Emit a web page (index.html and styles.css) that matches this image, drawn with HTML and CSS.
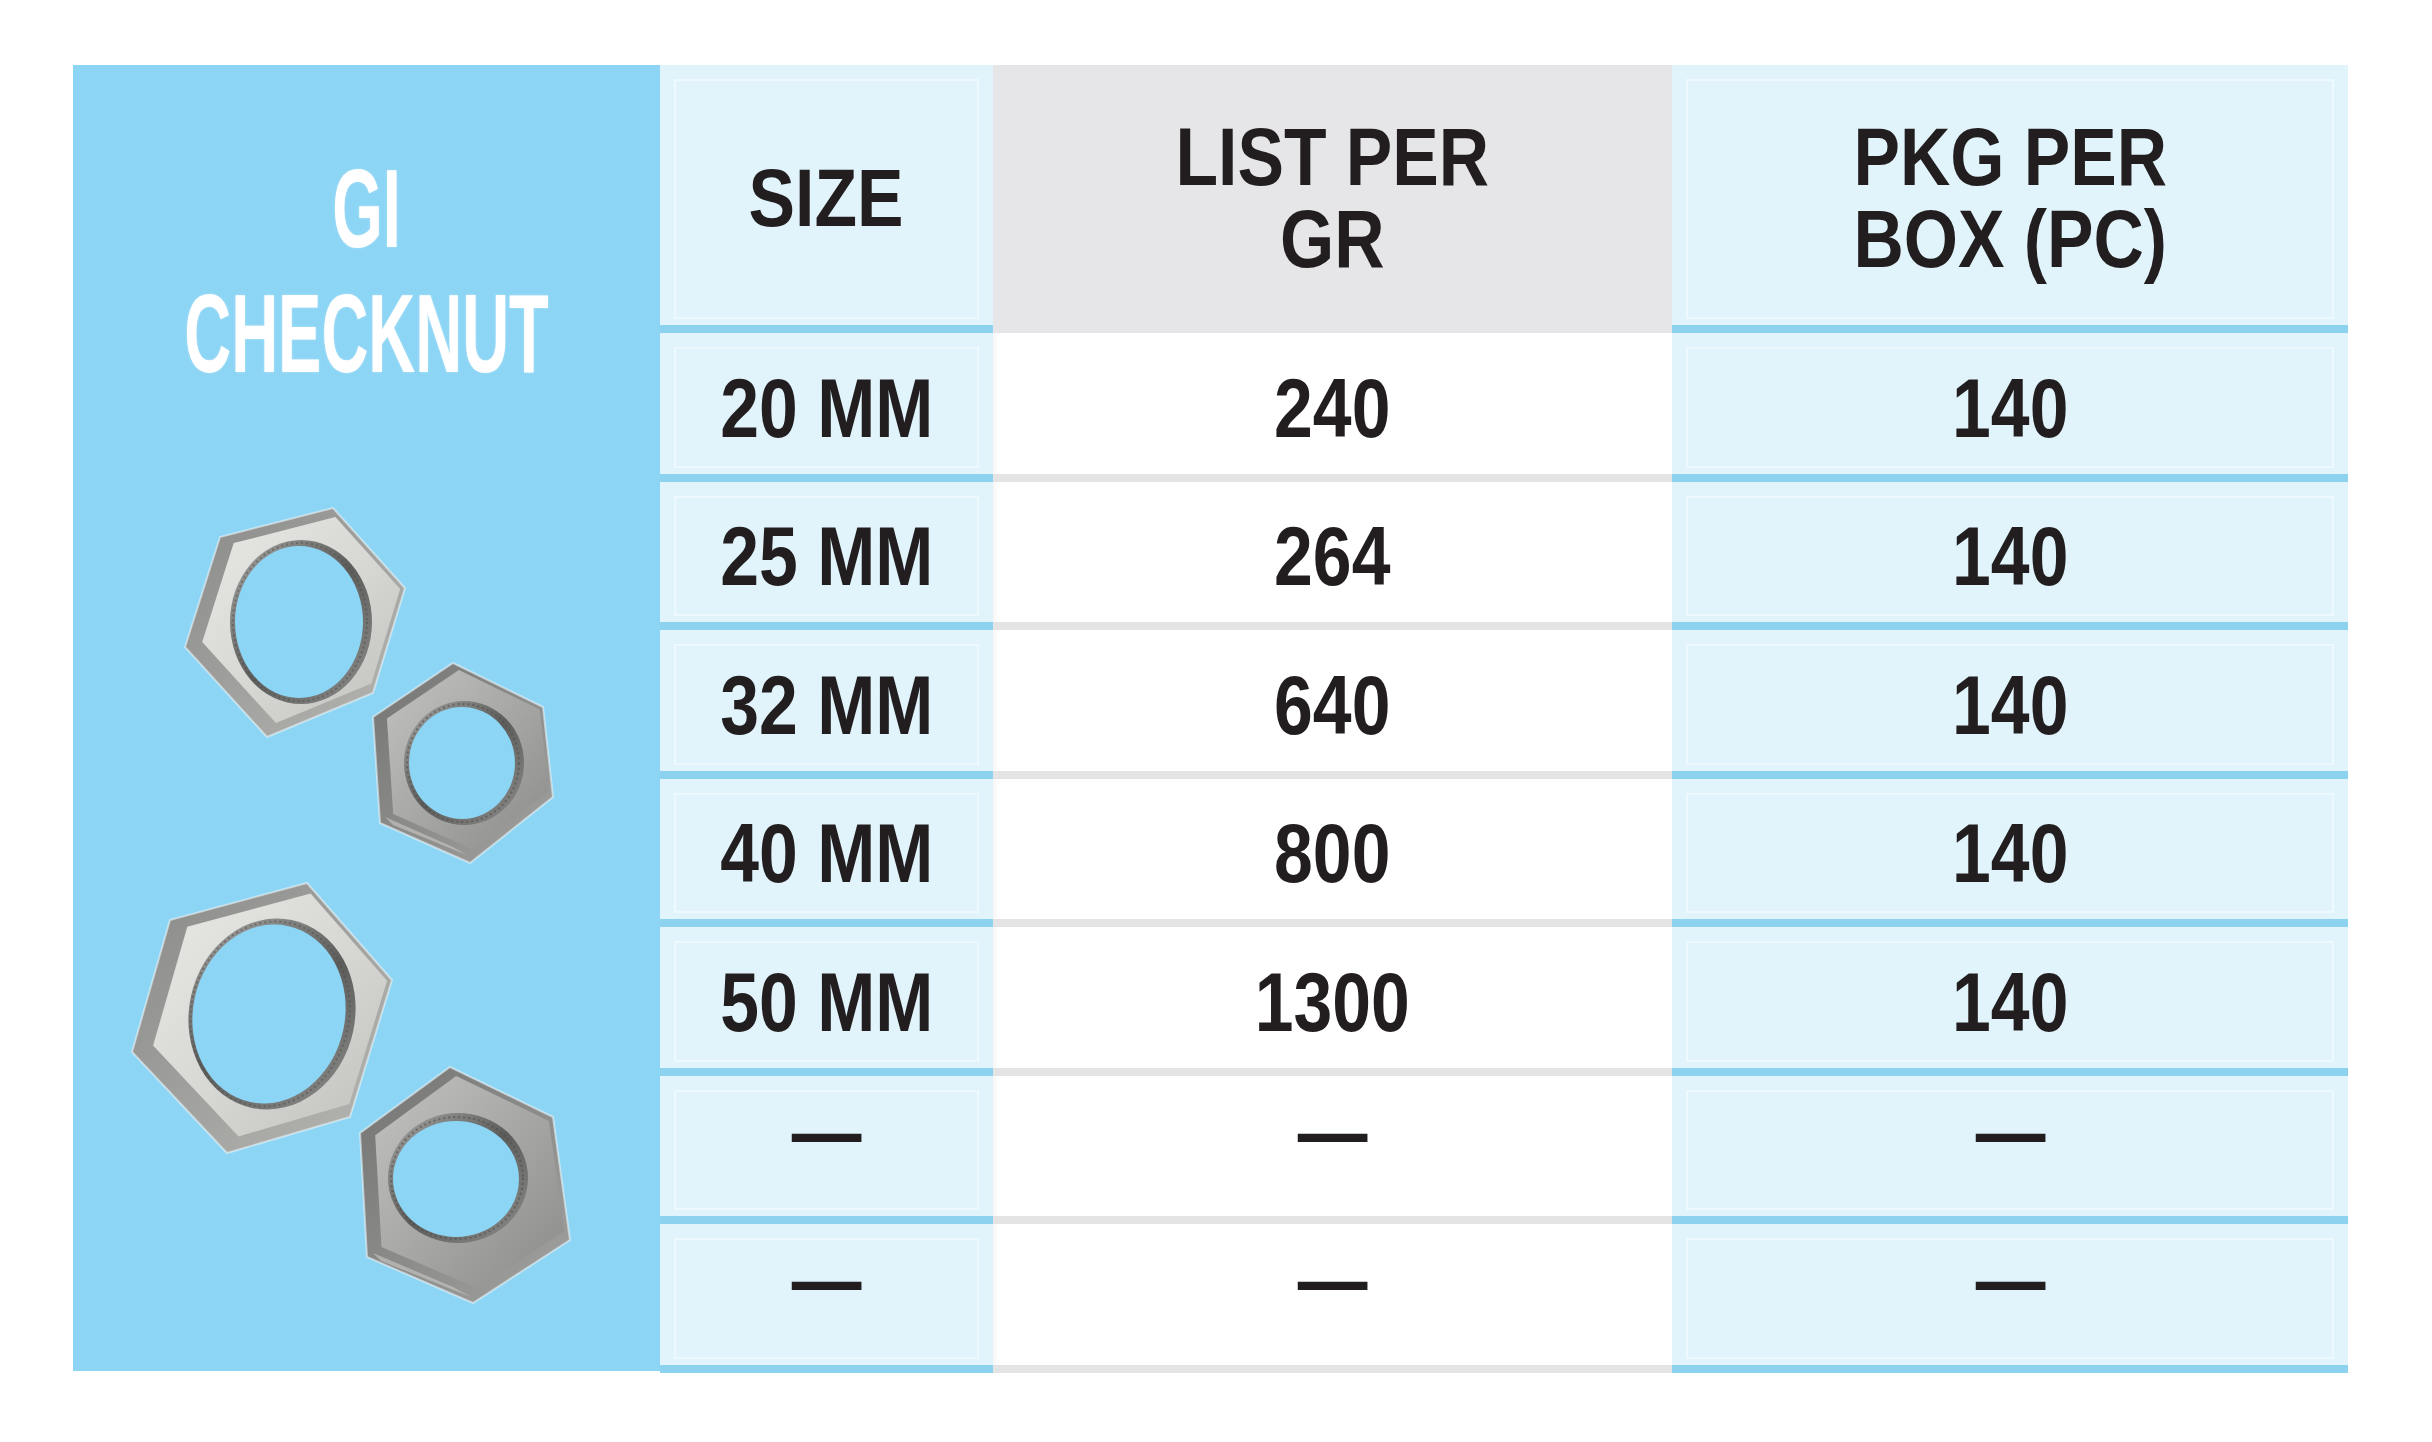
FILE: index.html
```html
<!DOCTYPE html>
<html lang="en">
<head>
<meta charset="utf-8">
<title>GI Checknut</title>
<link rel="stylesheet" href="styles.css">
</head>
<body>
<div class="sheet">
  <aside class="panel">
    <h1 class="title"><span>GI</span><span>CHECKNUT</span></h1>
    <svg class="nuts" viewBox="0 331 587 975" xmlns="http://www.w3.org/2000/svg">
      <defs>
        <linearGradient id="faceL" x1="0" y1="0" x2="1" y2="1">
          <stop offset="0" stop-color="#e8e8e5"/>
          <stop offset="0.5" stop-color="#d8d8d5"/>
          <stop offset="1" stop-color="#c0c0bd"/>
        </linearGradient>
        <linearGradient id="sideL" x1="0" y1="0" x2="1" y2="1">
          <stop offset="0" stop-color="#8a8a88"/>
          <stop offset="1" stop-color="#b6b6b3"/>
        </linearGradient>
        <linearGradient id="faceD" x1="0" y1="0" x2="1" y2="1">
          <stop offset="0" stop-color="#c2c2c0"/>
          <stop offset="0.5" stop-color="#a7a7a5"/>
          <stop offset="1" stop-color="#8b8b89"/>
        </linearGradient>
        <linearGradient id="sideD" x1="0" y1="0" x2="1" y2="1">
          <stop offset="0" stop-color="#747473"/>
          <stop offset="1" stop-color="#a2a2a0"/>
        </linearGradient>
        <linearGradient id="thread" x1="0" y1="0" x2="1" y2="1">
          <stop offset="0" stop-color="#a8a8a6"/>
          <stop offset="0.5" stop-color="#5c5c5b"/>
          <stop offset="1" stop-color="#8e8e8c"/>
        </linearGradient>
        <polygon id="n1" points="112,582 147,472 260,443 332,523 300,628 194,672"/>
        <polygon id="n2" points="380,598 470,642 480,732 397,798 307,758 300,652"/>
        <polygon id="n3" points="59,987 97,855 234,818 319,915 277,1052 154,1088"/>
        <polygon id="n4" points="377,1002 480,1052 497,1175 400,1238 294,1192 287,1068"/>
      </defs>

      <g class="nut">
        <use href="#n1" fill="url(#sideL)" stroke="#e9f3f7" stroke-width="2" stroke-opacity="0.6"/>
        <use href="#n1" fill="url(#faceL)" transform="translate(28.4 53.3) scale(0.9)"/>
        <ellipse cx="228" cy="557" rx="71" ry="82" fill="url(#thread)"/>
        <ellipse cx="227" cy="557" rx="67" ry="79" fill="none" stroke="#4e4e4d" stroke-width="2" stroke-dasharray="2 3" opacity="0.5"/>
        <ellipse cx="226" cy="557" rx="64" ry="76" fill="#8dd5f5"/>
      </g>

      <g class="nut">
        <use href="#n2" fill="url(#sideD)" stroke="#e9f3f7" stroke-width="2" stroke-opacity="0.6"/>
        <use href="#n2" fill="url(#faceD)" transform="translate(43.9 66.7) scale(0.9)"/>
        <polygon points="312,752 380,782 394,790 320,760" fill="#c9c9c7" opacity="0.6"/>
        <ellipse cx="391" cy="698" rx="60" ry="62" fill="url(#thread)"/>
        <ellipse cx="390" cy="698" rx="56" ry="59" fill="none" stroke="#4a4a49" stroke-width="2" stroke-dasharray="2 3" opacity="0.55"/>
        <ellipse cx="389" cy="698" rx="53" ry="56" fill="#8dd5f5"/>
      </g>

      <g class="nut">
        <use href="#n3" fill="url(#sideL)" stroke="#e9f3f7" stroke-width="2" stroke-opacity="0.6"/>
        <use href="#n3" fill="url(#faceL)" transform="translate(27 92.25) scale(0.9)"/>
        <ellipse cx="199" cy="949" rx="83" ry="96" fill="url(#thread)" transform="rotate(12 199 949)"/>
        <ellipse cx="197" cy="949" rx="79" ry="93" fill="none" stroke="#4e4e4d" stroke-width="2" stroke-dasharray="2 3" opacity="0.5" transform="rotate(12 197 949)"/>
        <ellipse cx="196" cy="949" rx="76" ry="90" fill="#8dd5f5" transform="rotate(12 196 949)"/>
      </g>

      <g class="nut">
        <use href="#n4" fill="url(#sideD)" stroke="#e9f3f7" stroke-width="2" stroke-opacity="0.6"/>
        <use href="#n4" fill="url(#faceD)" transform="translate(43.9 109.1) scale(0.9)"/>
        <polygon points="300,1188 380,1222 398,1232 308,1196" fill="#c9c9c7" opacity="0.6"/>
        <ellipse cx="385" cy="1113" rx="70" ry="65" fill="url(#thread)"/>
        <ellipse cx="384" cy="1113" rx="66" ry="61" fill="none" stroke="#4a4a49" stroke-width="2" stroke-dasharray="2 3" opacity="0.55"/>
        <ellipse cx="383" cy="1114" rx="63" ry="58" fill="#8dd5f5"/>
      </g>
    </svg>
  </aside>

  <div class="table">
    <div class="cell head blue"><span class="txt">SIZE</span></div>
    <div class="cell head gray"><span class="txt">LIST PER<br>GR</span></div>
    <div class="cell head blue"><span class="txt">PKG PER<br>BOX (PC)</span></div>

    <div class="cell blue"><span class="txt">20 MM</span></div>
    <div class="cell white"><span class="txt">240</span></div>
    <div class="cell blue"><span class="txt">140</span></div>

    <div class="cell blue"><span class="txt">25 MM</span></div>
    <div class="cell white"><span class="txt">264</span></div>
    <div class="cell blue"><span class="txt">140</span></div>

    <div class="cell blue"><span class="txt">32 MM</span></div>
    <div class="cell white"><span class="txt">640</span></div>
    <div class="cell blue"><span class="txt">140</span></div>

    <div class="cell blue"><span class="txt">40 MM</span></div>
    <div class="cell white"><span class="txt">800</span></div>
    <div class="cell blue"><span class="txt">140</span></div>

    <div class="cell blue"><span class="txt">50 MM</span></div>
    <div class="cell white"><span class="txt">1300</span></div>
    <div class="cell blue"><span class="txt">140</span></div>

    <div class="cell blue"><span class="txt dash">—</span></div>
    <div class="cell white"><span class="txt dash">—</span></div>
    <div class="cell blue"><span class="txt dash">—</span></div>

    <div class="cell blue"><span class="txt dash">—</span></div>
    <div class="cell white"><span class="txt dash">—</span></div>
    <div class="cell blue"><span class="txt dash">—</span></div>
  </div>
</div>
</body>
</html>
```

FILE: styles.css
```css
html, body {
  margin: 0;
  padding: 0;
  background: #ffffff;
}

.sheet {
  display: flex;
  align-items: flex-start;
  padding: 65px 0 0 73px;
}

.panel {
  width: 587px;
  height: 1306px;
  background: #8dd5f5;
  display: flex;
  flex-direction: column;
  flex: none;
}

.title {
  margin: 0;
  box-sizing: border-box;
  height: 331px;
  padding-top: 81px;
  display: flex;
  flex-direction: column;
  align-items: center;
  font-family: "Liberation Sans", sans-serif;
  font-weight: 700;
  font-size: 112px;
  line-height: 125px;
  color: #ffffff;
  transform: scaleX(0.58);
  text-shadow: 0 0 3px rgba(255, 255, 255, 0.4);
}

.nuts {
  display: block;
  width: 587px;
  height: 975px;
}

.table {
  display: grid;
  grid-template-columns: 333px 679px 676px;
  grid-template-rows: 268px repeat(7, 1fr);
  height: 1308px;
  flex: none;
}

.cell {
  box-sizing: border-box;
  display: flex;
  align-items: center;
  justify-content: center;
  text-align: center;
  padding-top: 10px;
  border-bottom: 8px solid transparent;
  font-family: "Liberation Sans", sans-serif;
  font-weight: 700;
  font-size: 83px;
  line-height: 1;
  color: #221e1f;
}

.txt {
  display: inline-block;
  transform: scaleX(0.84);
}

.head {
  font-size: 81px;
  line-height: 82px;
  padding-top: 6px;
}

.head .txt {
  transform: scaleX(0.86);
}

.blue {
  background: #e1f4fc;
  border-bottom-color: #8dd3f0;
  outline: 2px solid rgba(255, 255, 255, 0.45);
  outline-offset: -16px;
}

.white {
  background: #ffffff;
  border-bottom-color: #e4e4e5;
  box-shadow: inset 8px 0 6px -6px rgba(0, 0, 0, 0.05);
}

.gray {
  background: #e6e6e8;
  border-bottom-color: #e6e6e8;
}

.dash {
  padding-bottom: 40px;
}
```
